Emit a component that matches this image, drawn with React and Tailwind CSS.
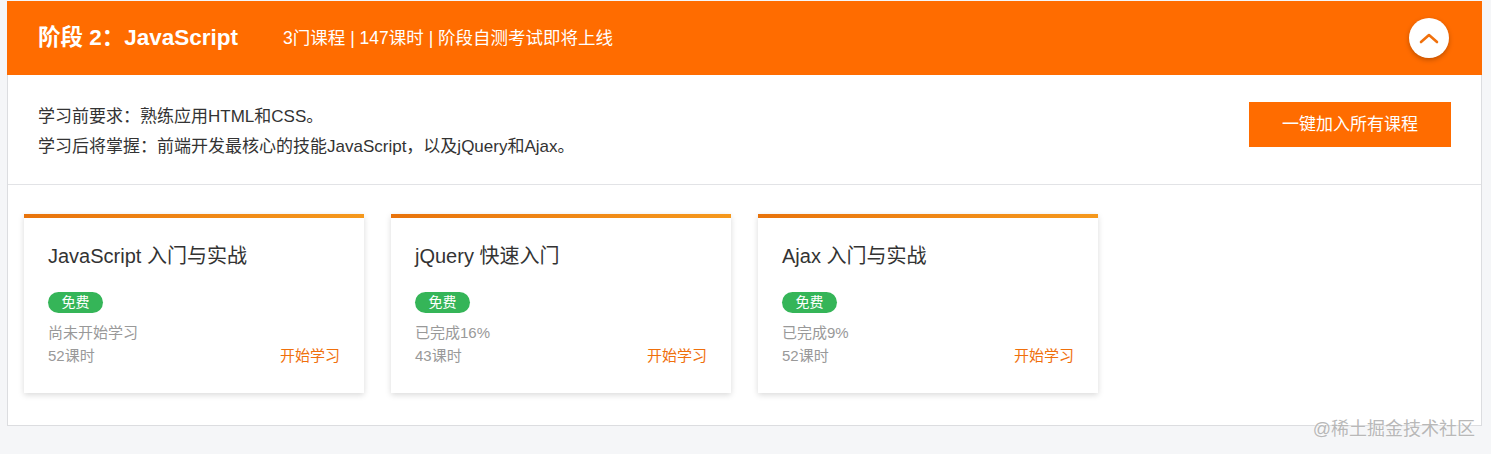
import React from 'react';

const courses = [
  { id: 1, title: 'JavaScript 入门与实战', status: '尚未开始学习', hours: 52 },
  { id: 2, title: 'jQuery 快速入门', status: '已完成16%', hours: 43 },
  { id: 3, title: 'Ajax 入门与实战', status: '已完成9%', hours: 52 },
];

function CourseCard({ course }) {
  return (
    <div className="w-[340px] bg-white shadow-[0_2px_6px_rgba(0,0,0,0.15)]">
      <div className="h-[4px] bg-gradient-to-r from-[#e8730b] to-[#f5981c]" />
      <div className="px-6 pt-[24px] pb-[26px]">
        <h3 className="text-[20px] leading-[28px] text-[#333]">{course.title}</h3>
        <span className="mt-[22px] inline-flex h-[21px] w-[55px] items-center justify-center rounded-full bg-[#35b558] text-[14px] text-white">
          免费
        </span>
        <p className="mt-[7px] text-[15px] leading-[23px] text-[#999]">{course.status}</p>
        <div className="flex items-center justify-between text-[15px] leading-[23px]">
          <span className="text-[#999]">{course.hours}课时</span>
          <button className="text-[#f0700c]">开始学习</button>
        </div>
      </div>
    </div>
  );
}

export default function App() {
  return (
    <div
      className="relative min-h-[454px] bg-[#f5f6f8] pt-[1px] pl-[7px] pr-[9px]"
      style={{ fontFamily: '"Liberation Sans", "Noto Sans CJK SC", sans-serif' }}
    >
      <div className="border border-t-0 border-[#dcdde0] bg-white">
        <div className="-mx-px flex h-[74px] items-center bg-[#ff6c00] pl-[31px] pr-[33px] text-white">
          <h2 className="text-[22.5px] font-bold">阶段 2：JavaScript</h2>
          <span className="ml-[45px] text-[17.5px]">3门课程 | 147课时 | 阶段自测考试即将上线</span>
          <button className="ml-auto flex h-[40px] w-[40px] items-center justify-center rounded-full bg-white shadow-[0_2px_5px_rgba(0,0,0,0.25)]">
            <svg width="20" height="12" viewBox="0 0 20 12" fill="none">
              <path d="M2 10 L10 3 L18 10" stroke="#f0700c" strokeWidth="2.6" strokeLinecap="round" strokeLinejoin="round" />
            </svg>
          </button>
        </div>

        <div className="flex items-start justify-between border-b border-[#e2e3e6] pl-[30px] pr-[30px] pt-[27px] pb-[22px]">
          <div className="text-[17px] leading-[30px] text-[#333]">
            <p>学习前要求：熟练应用HTML和CSS。</p>
            <p>学习后将掌握：前端开发最核心的技能JavaScript，以及jQuery和Ajax。</p>
          </div>
          <button className="h-[45px] w-[202px] bg-[#ff6c00] text-[17px] text-white">
            一键加入所有课程
          </button>
        </div>

        <div className="flex gap-[27px] pl-[16px] pt-[29px] pb-[32px]">
          {courses.map((c) => (
            <CourseCard key={c.id} course={c} />
          ))}
        </div>
      </div>

      <span className="absolute right-[16px] top-[416px] text-[18px] text-[#b8b8b8] [text-shadow:0_0_2px_#fff]">
        @稀土掘金技术社区
      </span>
    </div>
  );
}
